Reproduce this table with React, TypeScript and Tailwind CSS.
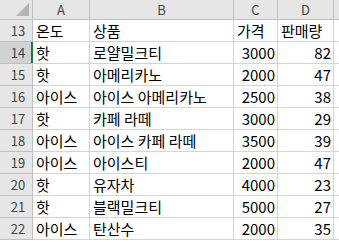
const rows: [number, string, string, string, string][] = [
  [13, "온도", "상품", "가격", "판매량"],
  [14, "핫", "로얄밀크티", "3000", "82"],
  [15, "핫", "아메리카노", "2000", "47"],
  [16, "아이스", "아이스 아메리카노", "2500", "38"],
  [17, "핫", "카페 라떼", "3000", "29"],
  [18, "아이스", "아이스 카페 라떼", "3500", "39"],
  [19, "아이스", "아이스티", "2000", "47"],
  [20, "핫", "유자차", "4000", "23"],
  [21, "핫", "블랙밀크티", "5000", "27"],
  [22, "아이스", "탄산수", "2000", "35"],
];

const font = { fontFamily: '"Noto Sans CJK KR", "Noto Sans", sans-serif' };

export default function App() {
  return (
    <div className="h-[242px] w-[339px] overflow-hidden bg-white text-black" style={font}>
      <div className="grid grid-cols-[33px_57px_144px_44px_56px_20px]">
        {/* column headers */}
        <div className="relative h-[20px] border-b border-r border-[#bfbfbf] bg-[#e6e6e6]">
          <div className="absolute bottom-[3px] right-[3px] h-0 w-0 border-l-[13px] border-t-[13px] border-l-transparent border-t-transparent border-b-0 border-r-0" style={{ borderBottom: "13px solid #b4b4b4", borderLeft: "13px solid transparent", borderTop: "0", borderRight: "0" }} />
        </div>
        {["A", "B", "C", "D", ""].map((c, i) => (
          <div
            key={i}
            className="flex h-[20px] items-center justify-center border-b border-r border-[#bfbfbf] bg-[#e6e6e6] text-[13px] text-[#444444]"
          >
            {c}
          </div>
        ))}
        {rows.map(([n, a, b, c, d]) => {
          const sel = n === 14;
          const num = n !== 13;
          return [
            <div
              key={`h${n}`}
              className={`relative flex h-[22px] items-center justify-center border-b border-r border-[#bfbfbf] pl-[4px] text-[13px] text-[#444444] ${sel ? "bg-[#d2d2d2]" : "bg-[#e6e6e6]"}`}
            >
              {n}
              {sel && <div className="absolute right-[-1px] top-0 h-full w-[2px] bg-[#217346]" />}
            </div>,
            <div key={`a${n}`} className="flex h-[22px] items-center border-b border-r border-[#d4d4d4] pl-[3px] text-[15px] leading-none whitespace-nowrap">
              {a}
            </div>,
            <div key={`b${n}`} className="flex h-[22px] items-center border-b border-r border-[#d4d4d4] pl-[3px] text-[15px] leading-none whitespace-nowrap">
              {b}
            </div>,
            <div
              key={`c${n}`}
              className={`flex h-[22px] items-center border-b border-r border-[#d4d4d4] text-[15px] leading-none whitespace-nowrap ${num ? "justify-end pr-[2px]" : "pl-[3px]"}`}
            >
              {c}
            </div>,
            <div
              key={`d${n}`}
              className={`flex h-[22px] items-center border-b border-r border-[#d4d4d4] text-[15px] leading-none whitespace-nowrap ${num ? "justify-end pr-[2px]" : "pl-[3px]"}`}
            >
              {d}
            </div>,
            <div key={`e${n}`} className="h-[22px] border-b border-[#d4d4d4]" />,
          ];
        })}
      </div>
    </div>
  );
}
